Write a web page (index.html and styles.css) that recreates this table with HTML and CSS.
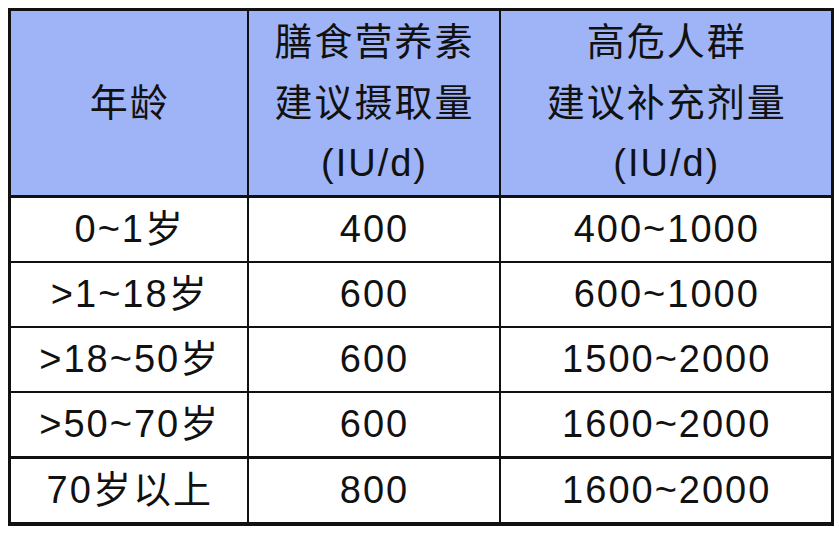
FILE: index.html
```html
<!DOCTYPE html>
<html lang="zh">
<head>
<meta charset="utf-8">
<link rel="stylesheet" href="styles.css">
</head>
<body>
<table class="dose">
  <colgroup>
    <col class="c1">
    <col class="c2">
    <col class="c3">
  </colgroup>
  <thead>
    <tr>
      <th>年龄</th>
      <th>膳食营养素<br>建议摄取量<br>(IU/d)</th>
      <th>高危人群<br>建议补充剂量<br>(IU/d)</th>
    </tr>
  </thead>
  <tbody>
    <tr><td>0~1岁</td><td>400</td><td>400~1000</td></tr>
    <tr><td>&gt;1~18岁</td><td>600</td><td>600~1000</td></tr>
    <tr><td>&gt;18~50岁</td><td>600</td><td>1500~2000</td></tr>
    <tr class="before-last"><td>&gt;50~70岁</td><td>600</td><td>1600~2000</td></tr>
    <tr class="last"><td>70岁以上</td><td>800</td><td>1600~2000</td></tr>
  </tbody>
</table>
</body>
</html>
```

FILE: styles.css
```css
html, body {
  margin: 0;
  padding: 0;
  background: #ffffff;
}

body {
  padding: 8px 0 0 8px;
  font-family: "Liberation Sans", "Noto Sans CJK SC", sans-serif;
  color: #111111;
}

.dose {
  border-collapse: collapse;
  table-layout: fixed;
  width: 823px;
  border: 3px solid #111111;
  border-bottom-width: 4px;
}

.c1 { width: 238px; }
.c2 { width: 252px; }
.c3 { width: 333px; }

.dose th,
.dose td {
  border: 2px solid #111111;
  text-align: center;
  vertical-align: middle;
  padding: 0 0 0 2px;
  font-size: 38px;
  font-weight: normal;
  letter-spacing: 2px;
}

.dose th {
  background: #9fb4f7;
  height: 184px;
  line-height: 60.5px;
  border-bottom-width: 3px;
}

.dose td {
  height: 63px;
  line-height: 63px;
}

.dose .before-last td {
  border-bottom-width: 3px;
}
```
